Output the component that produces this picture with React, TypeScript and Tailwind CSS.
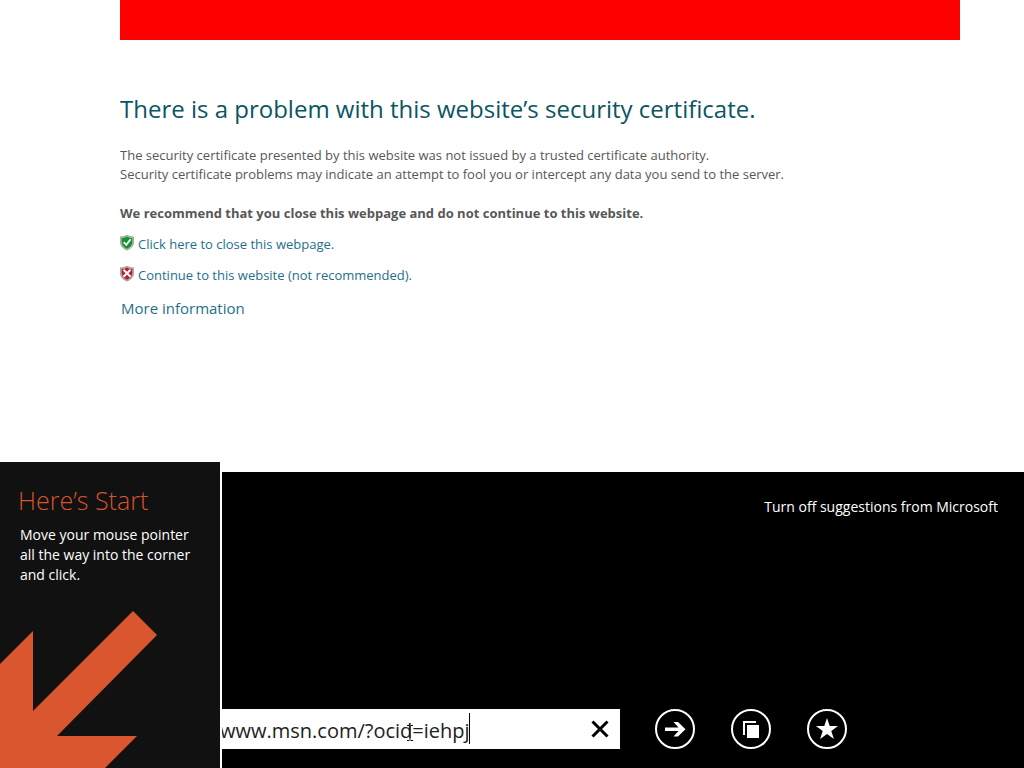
import { useState } from "react"

function ShieldOk() {
  return (
    <svg className="h-4 w-3.5 shrink-0" viewBox="0 0 14 16" aria-hidden="true">
      <path d="M7 0C5 1.4 3 1.800.4 1.800v5.200c0 4 2.800 6.600 6.600 8.100 3.800-1.500 6.600-4.100 6.600-8.100V1.800C11 1.800 9 1.400 7 0z" fill="#b3bdb0" stroke="#7d8a7b" strokeWidth=".6" />
      <path d="M7 1.400C5.300 2.400 3.600 3 1.700 3.100v4c0 3 2 5.300 5.300 6.600 3.300-1.300 5.300-3.600 5.300-6.600v-4C10.400 3 8.700 2.400 7 1.400z" fill="#12922c" />
      <path d="M3.700 7.200l2.600 2.700L10.600 4.200" fill="none" stroke="#fff" strokeWidth="1.900" />
    </svg>
  )
}

function ShieldBad() {
  return (
    <svg className="h-4 w-3.5 shrink-0" viewBox="0 0 14 16" aria-hidden="true">
      <path d="M7 0C5 1.400 3 1.800.4 1.800v5.200c0 4 2.800 6.600 6.600 8.100 3.800-1.500 6.600-4.100 6.600-8.100V1.800C11 1.800 9 1.400 7 0z" fill="#b9adad" stroke="#8c7f7f" strokeWidth=".6" />
      <path d="M7 1.400C5.300 2.400 3.600 3 1.700 3.100v4c0 3 2 5.300 5.300 6.600 3.300-1.300 5.300-3.600 5.300-6.600v-4C10.400 3 8.700 2.400 7 1.400z" fill="#b8202d" />
      <path d="M3.500 3.700l7 7M10.500 3.700l-7 7" fill="none" stroke="#fff" strokeWidth="2" />
    </svg>
  )
}

function StartHint() {
  return (
    <aside className="absolute bottom-0 left-0 flex h-[306px] w-[222px] flex-col border-r-2 border-white bg-[#111111]">
      <div className="px-5 pt-5">
        <h2 className="-ml-0.5 text-[25px] leading-9 font-light text-[#d9532c]">Here’s Start</h2>
        <p className="mt-[7px] text-sm leading-5 text-white">
          Move your mouse pointer
          <br />
          all the way into the corner
          <br />
          and click.
        </p>
      </div>
      <svg className="mt-auto h-[158px] w-[160px]" viewBox="0 0 160 158" aria-hidden="true">
        <path d="M133 1l24 24L57 126h80l-32 32H0V54l33-33v80z" fill="#d9562e" />
      </svg>
    </aside>
  )
}

function AddressBar() {
  const [url, setUrl] = useState("www.msn.com/?ocid=iehpj")

  return (
    <form className="relative flex h-10 w-[400px] shrink-0 bg-white" onSubmit={(e) => e.preventDefault()}>
      <input
        type="text"
        aria-label="Address"
        value={url}
        onChange={(e) => setUrl(e.target.value)}
        className="min-w-0 flex-1 bg-white pt-1 text-xl text-[#222222] outline-none"
      />
      {/* text caret and mouse pointer */}
      <span className="absolute top-1 left-[249px] h-[31px] w-px bg-black" />
      <svg className="absolute top-4 left-[186px] h-4 w-2" viewBox="0 0 8 16" aria-hidden="true">
        <path d="M1 .5h2.500M4.500 .5H7M4 1v14M1 15.500h2.500M4.500 15.500H7" fill="none" stroke="#111" />
      </svg>
      <button type="button" aria-label="Stop" className="flex w-10 items-center justify-center">
        <svg className="size-[18px]" viewBox="0 0 18 18" aria-hidden="true">
          <path d="M1.500 1.500l15 15M16.500 1.500l-15 15" stroke="#000" strokeWidth="3" />
        </svg>
      </button>
    </form>
  )
}

const roundButton = "flex size-10 shrink-0 items-center justify-center rounded-full border-2 border-white text-white"

export default function App() {
  return (
    <div className="relative flex min-h-screen flex-col bg-white font-['Open_Sans','Noto_Sans',sans-serif]">
      <main className="flex-1 pr-16 pl-30">
        <div className="h-10 bg-[#ff0000]" />
        <h1 className="mt-[51px] text-2xl leading-9 text-[#0b5563]">
          There is a problem with this website’s security certificate.
        </h1>
        <p className="mt-[19px] text-[13px] leading-[19px] text-[#575757]">
          The security certificate presented by this website was not issued by a trusted certificate authority.
          <br />
          Security certificate problems may indicate an attempt to fool you or intercept any data you send to the server.
        </p>
        <p className="mt-5 text-[13px] leading-[19px] font-bold text-[#575757]">
          We recommend that you close this webpage and do not continue to this website.
        </p>
        <ul className="mt-3 space-y-3 text-[13px] leading-[19px] text-[#1f6f8b]">
          <li className="flex gap-1">
            <ShieldOk />
            <a href="#close">Click here to close this webpage.</a>
          </li>
          <li className="flex gap-1">
            <ShieldBad />
            <a href="#continue">Continue to this website (not recommended).</a>
          </li>
        </ul>
        <a href="#more" className="mt-[11px] inline-block pl-px text-[15px] leading-6 text-[#1f6f8b]">
          More information
        </a>
      </main>

      <footer className="flex h-[296px] flex-col justify-between bg-black pt-[25px] pb-[19px]">
        <a href="#suggestions" className="self-end pr-[26px] text-sm leading-5 text-white">
          Turn off suggestions from Microsoft
        </a>
        <div className="flex items-center pl-[220px]">
          <AddressBar />
          <div className="flex gap-9 pl-[35px]">
            <button type="button" aria-label="Go" className={roundButton}>
              <svg className="size-6" viewBox="0 0 24 24" fill="currentColor" aria-hidden="true">
                <path d="M2 10.500h13.500L10.500 5H15l7.500 7.200L15 19.500h-4.500l5-5.500H2z" />
              </svg>
            </button>
            <button type="button" aria-label="Tabs" className={roundButton}>
              <svg className="size-6" viewBox="0 0 24 24" fill="currentColor" aria-hidden="true">
                <path d="M4 4h13v2H6v12H4z" />
                <path d="M8 8h12v13H8z" />
              </svg>
            </button>
            <button type="button" aria-label="Favorites" className={roundButton}>
              <svg className="size-6" viewBox="0 0 24 24" fill="currentColor" aria-hidden="true">
                <path d="M12 1l2.700 8H23l-6.700 5 2.600 8L12 17l-6.900 5 2.600-8L1 9h8.300z" />
              </svg>
            </button>
          </div>
        </div>
      </footer>

      <StartHint />
    </div>
  )
}
